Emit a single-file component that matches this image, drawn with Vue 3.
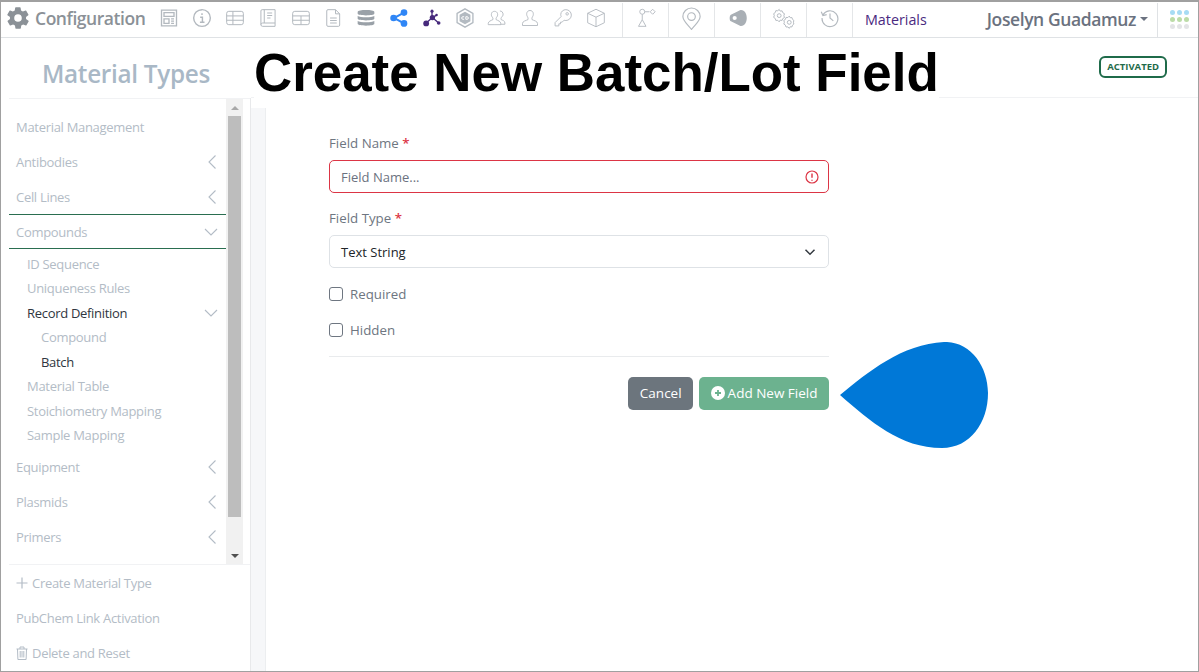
<script setup>
const icons = [
  { d: 'M3 2.500h18v19H3zM6 5.500h12v4.500H6zM6 13h6v5.500H6zM14.500 13H18M14.500 15.700H18M14.500 18.400H18', w: 1.600 },
  { d: 'M12 2a10 10 0 1 0 0 20a10 10 0 0 0 0-20zM12 6.200v2.300M9.800 11h2.700v6M9.500 17h5.500', w: 1.700 },
  { d: 'M4.500 4h15A2.500 2.500 0 0 1 22 6.500v11a2.500 2.500 0 0 1-2.500 2.500h-15A2.500 2.500 0 0 1 2 17.500v-11A2.500 2.500 0 0 1 4.500 4zM2 9.500h20M2 14.700h20M9.500 4V20', w: 1.200 },
  { d: 'M3.500 20V3.500A1.500 1.500 0 0 1 5 2h15.500v16H5.500A2 2 0 0 0 3.500 20A2 2 0 0 0 5.500 22h15v-4M7.500 2v16M11 6h6M11 9h6M11 12h4', w: 1.200 },
  { d: 'M4.500 4h15A2.500 2.500 0 0 1 22 6.500v11a2.500 2.500 0 0 1-2.500 2.500h-15A2.500 2.500 0 0 1 2 17.500v-11A2.500 2.500 0 0 1 4.500 4zM2 9.500h20M2 14.700h20M12 9.500V20', w: 1.200 },
  { d: 'M6 2h9l5 5v13.500a1.500 1.500 0 0 1-1.500 1.500H6a1.500 1.500 0 0 1-1.500-1.500v-17A1.500 1.500 0 0 1 6 2zM15 2v5h5M8.500 12h8M8.500 15h8M8.500 18h8', w: 1.200 }
]
const icons2 = [
  { d: 'M15.500 3.500a4 4 0 0 1 2.500 7c-1 1-1.500 2-1 3.500c2 .8 4.500 1.500 4.500 4v1.500H16M8.500 20H1.500v-1.500c0-2.500 3.500-3.500 5.500-4.500c.5-1.500-.2-2.500-1-3.500c-1.500-2-1-6.500 3-6.500s4.500 4.500 3 6.500c-.8 1-1.500 2-1 3.500c2 1 5.500 2 5.500 4.500V20z', w: 1.100 },
  { d: 'M12 3c4 0 4.800 4.500 3.300 7c-.8 1.300-1.300 2.500-.8 4c2 1 6.500 1.800 6.500 4.500V21H3v-2.500c0-2.700 4.500-3.500 6.500-4.500c.5-1.500 0-2.700-.8-4C7.200 7.500 8 3 12 3z', w: 1.100 },
  { d: 'M15.500 2a6.500 6.500 0 0 1 0 13c-.8 0-1.500-.1-2.200-.4L11 17H9v2H7v2.500H2.500v-4l7.300-7.300c-.3-.7-.5-1.500-.5-2.500a6 6 0 0 1 6.200-5.700zM17 5.500a1.500 1.500 0 1 0 0 3a1.500 1.500 0 0 0 0-3z', w: 1.100 },
  { d: 'M12 1.500l10 4.800v11.400L12 22.500L2 17.700V6.300zM2 6.300l10 4.700l10-4.700M12 11v11.500', w: 1.100 }
]
const dots = ['#a7dcf4', '#a7dcf4', '#a7dcf4', '#bcdca8', '#bcdca8', '#bcdca8', '#e3e4e6', '#e3e4e6', '#e3e4e6']
</script>

<template>
  <div class="frame">
    <header class="topbar">
      <div class="brand">
        <svg class="gear" viewBox="0 0 24 24"><path d="M19.400 13a7.700 7.700 0 0 0 0-2l2.100-1.600a.5.5 0 0 0 .1-.6l-2-3.500a.5.5 0 0 0-.6-.2l-2.500 1a7.300 7.300 0 0 0-1.700-1l-.4-2.600a.5.500 0 0 0-.5-.4h-4a.5.500 0 0 0-.5.400l-.4 2.600a7.300 7.300 0 0 0-1.700 1l-2.500-1a.5.500 0 0 0-.6.200l-2 3.500a.5.500 0 0 0 .1.600L4.600 11a7.700 7.700 0 0 0 0 2l-2.100 1.600a.5.500 0 0 0-.1.600l2 3.500c.1.200.4.300.6.200l2.500-1c.5.400 1.100.700 1.700 1l.4 2.600c0 .2.200.4.500.4h4c.3 0 .5-.2.500-.4l.4-2.600c.6-.3 1.200-.6 1.700-1l2.500 1c.2.100.5 0 .6-.2l2-3.500a.5.500 0 0 0-.1-.6zM12 15.500a3.500 3.500 0 1 1 0-7a3.500 3.500 0 0 1 0 7z"/></svg>
        <span>Configuration</span>
      </div>
      <div class="icons">
        <span v-for="(ic, i) in icons" :key="i" class="ic">
          <svg viewBox="0 0 24 24" class="line"><path :d="ic.d" :stroke-width="ic.w"/></svg>
        </span>
        <span class="ic">
          <svg viewBox="0 0 24 24"><path fill="#9aa1a8" d="M2 4.500C2 1.500 22 1.500 22 4.500v2.500C22 9.500 2 9.500 2 7zM2 9.500c3 2.200 17 2.200 20 0V13c0 2.500-20 2.500-20 0zM2 15.500c3 2.200 17 2.200 20 0v3.500c0 3-20 3-20 0z"/></svg>
        </span>
        <span class="ic">
          <svg viewBox="0 0 24 24"><path fill="none" stroke="#2f86f6" stroke-width="2.400" d="M18 5.500L6 12l12 6.500"/><circle cx="18" cy="5.500" r="4" fill="#2f86f6"/><circle cx="5.500" cy="12" r="4" fill="#2f86f6"/><circle cx="18" cy="18.500" r="4" fill="#2f86f6"/></svg>
        </span>
        <span class="ic">
          <svg viewBox="0 0 24 24"><path fill="none" stroke="#472a7c" stroke-width="1.600" d="M12 4v7.500M12.500 11.500L5 18M12.500 11.500L20 18M12.500 11.500l5-3"/><circle cx="12" cy="3.800" r="1.900" fill="#472a7c"/><circle cx="12.500" cy="11.500" r="3.200" fill="#472a7c"/><circle cx="5" cy="18.500" r="3.500" fill="#472a7c"/><circle cx="20" cy="18" r="2.200" fill="#472a7c"/><circle cx="17.500" cy="8.500" r="1.500" fill="#472a7c"/></svg>
        </span>
        <span class="ic">
          <svg viewBox="0 0 24 24"><path fill="none" stroke="#b3bac1" stroke-width="1.600" d="M12 1l9.500 5.500v11L12 23l-9.500-5.500v-11z"/><path fill="#b3bac1" d="M12 4.500l6.500 3.700v7.600L12 19.500l-6.500-3.700V8.200z"/><path fill="none" stroke="#fff" stroke-width="1.200" d="M11 10.500H9.500a1.500 1.500 0 0 0 0 3H11M13 10.500h1.500a1.500 1.500 0 0 1 0 3H13z"/></svg>
        </span>
        <span v-for="(ic, i) in icons2" :key="'b' + i" class="ic">
          <svg viewBox="0 0 24 24" class="line"><path :d="ic.d" :stroke-width="ic.w"/></svg>
        </span>
      </div>
      <div class="cell branch">
        <svg viewBox="0 0 24 24" class="line"><path stroke-width="1.100" d="M7.500 1.500a3 3 0 1 0 0 6a3 3 0 0 0 0-6zM10.500 4.500H16M20 1.500l3 3l-3 3l-3-3zM7.500 7.500V14M7.500 14l4.500 8H3z"/></svg>
      </div>
      <div class="cell pin">
        <svg viewBox="0 0 24 24" class="line"><path stroke-width="1.200" d="M12 1a9 9 0 0 1 9 9c0 5-5.500 8.500-9 13.500C8.500 18.500 3 15 3 10A9 9 0 0 1 12 1zM12 6a4 4 0 1 0 0 8a4 4 0 0 0 0-8z"/></svg>
      </div>
      <div class="cell shield">
        <svg viewBox="0 0 24 24"><path fill="#a9afb5" fill-rule="evenodd" d="M3.500 8L15 2.500C20 2 22.500 7 22.500 12S20 22 15 21.500L3.500 16C1.500 15 1.500 9 3.500 8zM8 9.500a2.500 2.500 0 1 0 0 5a2.500 2.500 0 0 0 0-5z"/></svg>
      </div>
      <div class="cell gears">
        <svg viewBox="0 0 24 24" class="line"><path stroke-width="1" d="M7.500 2.500l1 1.800l2-.3l.8 2l1.700 1l-.6 2l.6 2l-1.700 1l-.8 2l-2-.3l-1 1.800l-1.500-1.600l-2 .1l-.6-2l-1.700-1.200l.7-1.900l-.7-1.900l1.700-1.200l.6-2l2 .1zM7.500 7a2 2 0 1 0 0 4a2 2 0 0 0 0-4zM18 9.500l1 1.700l1.800-.2l.6 1.900l1.400 1.100l-.4 1.900l.4 1.900l-1.400 1.100l-.6 1.900l-1.800-.2l-1 1.700l-1.400-1.500l-2 .1l-.6-2l-1.700-1.100l.6-1.900l-.6-1.900l1.700-1.100l.6-2l2 .1zM18 14a2 2 0 1 0 0 4a2 2 0 0 0 0-4z"/></svg>
      </div>
      <div class="cell history">
        <svg viewBox="0 0 24 24" class="line"><path stroke-width="1.400" d="M3.500 8.500A9.500 9.500 0 1 1 2.500 12M1.500 4.500l2 4.500l4.500-1M12 6.500V12l4 3.500"/></svg>
      </div>
      <div class="materials">Materials</div>
      <div class="user">Joselyn Guadamuz<i class="caret"></i></div>
      <div class="apps">
        <i v-for="(c, i) in dots" :key="i" :style="{ background: c }"></i>
      </div>
    </header>

    <div class="subhead">
      <div class="subhead-left"><h2>Material Types</h2></div>
      <div class="subhead-right"><span class="badge">ACTIVATED</span></div>
    </div>

    <div class="body">
      <aside class="sidebar">
        <div class="scroll">
          <nav class="menu">
            <a class="row">Material Management</a>
            <a class="row">Antibodies<svg viewBox="0 0 12 16" class="chev"><path d="M9.500 1.500L3 8l6.500 6.500"/></svg></a>
            <a class="row">Cell Lines<svg viewBox="0 0 12 16" class="chev"><path d="M9.500 1.500L3 8l6.500 6.500"/></svg></a>
            <a class="row open">Compounds<svg viewBox="0 0 16 12" class="chev down"><path d="M2 3l6 6l6-6"/></svg></a>
            <div class="sub">
              <a>ID Sequence</a>
              <a>Uniqueness Rules</a>
              <a class="active">Record Definition<svg viewBox="0 0 16 12" class="chev down"><path d="M2 3l6 6l6-6"/></svg></a>
              <a class="deep">Compound</a>
              <a class="deep active">Batch</a>
              <a>Material Table</a>
              <a>Stoichiometry Mapping</a>
              <a>Sample Mapping</a>
            </div>
            <a class="row">Equipment<svg viewBox="0 0 12 16" class="chev"><path d="M9.500 1.500L3 8l6.500 6.500"/></svg></a>
            <a class="row">Plasmids<svg viewBox="0 0 12 16" class="chev"><path d="M9.500 1.500L3 8l6.500 6.500"/></svg></a>
            <a class="row">Primers<svg viewBox="0 0 12 16" class="chev"><path d="M9.500 1.500L3 8l6.500 6.500"/></svg></a>
          </nav>
          <div class="scrollbar">
            <i class="arrow up"></i>
            <div class="thumb"></div>
            <i class="arrow dn"></i>
          </div>
        </div>
        <div class="actions">
          <a><svg viewBox="0 0 12 12" class="plus"><path d="M6 .5v11M.5 6h11"/></svg>Create Material Type</a>
          <a>PubChem Link Activation</a>
          <a><svg viewBox="0 0 12 14" class="trash"><path d="M.5 3h11M4 3V1h4v2M1.500 3l.4 10.500h8.200L10.500 3M4.200 5v6.500M6 5v6.500M7.800 5v6.500"/></svg>Delete and Reset</a>
        </div>
      </aside>
      <div class="gutter"></div>
      <main class="content">
        <form class="form" @submit.prevent>
          <label class="label">Field Name <b>*</b></label>
          <div class="input invalid">
            <span>Field Name...</span>
            <svg viewBox="0 0 14 14" class="warn"><circle cx="7" cy="7" r="6"/><path d="M7 3.500v4.200M7 9.700v1"/></svg>
          </div>
          <label class="label second">Field Type <b>*</b></label>
          <div class="input select">
            <span>Text String</span>
            <svg viewBox="0 0 16 16" class="caret-down"><path d="M2 5l6 6l6-6"/></svg>
          </div>
          <label class="check first"><i></i>Required</label>
          <label class="check"><i></i>Hidden</label>
          <hr />
          <div class="buttons">
            <button type="button" class="btn cancel">Cancel</button>
            <button type="button" class="btn add">
              <svg viewBox="0 0 14 14"><circle cx="7" cy="7" r="7" fill="#fff"/><path d="M7 4v6M4 7h6" stroke="#6cb28f" stroke-width="1.800"/></svg>Add New Field
            </button>
          </div>
        </form>
      </main>
    </div>

    <h1 class="overlay-title">Create New Batch/Lot Field</h1>
    <svg class="drop" viewBox="0 0 148 106"><path d="M0 53C28 30 62 2 104 0c26-1 44 24 44 51c0 30-18 55-46 55C60 106 30 79 0 53z"/></svg>
  </div>
</template>

<style>
html, body { margin: 0; background: #fff; }
</style>

<style scoped>
.frame {
  position: relative;
  width: 1199px;
  height: 672px;
  box-sizing: border-box;
  border: 1px solid #a0a0a0;
  border-top-width: 2px;
  font-family: "Open Sans", "Noto Sans", sans-serif;
  overflow: hidden;
  display: flex;
  flex-direction: column;
  background: #fff;
}
svg { display: block; }
.line path { fill: none; stroke: #b3b9bf; }
.topbar {
  display: flex;
  align-items: center;
  height: 35px;
  flex: none;
  border-bottom: 1px solid #dfe2e5;
}
.brand {
  display: flex;
  align-items: center;
  width: 152px;
  padding: 0 0 4px 4px;
  box-sizing: border-box;
  color: #8b9197;
  font-weight: 600;
  font-size: 17.500px;
  letter-spacing: -.45px;
  gap: 4px;
  flex: none;
}
.gear { width: 26px; height: 26px; flex: none; }
.gear path { fill: #8b9197; fill-rule: evenodd; }
.icons { display: flex; width: 469px; padding-bottom: 3px; flex: none; }
.ic { width: 32.800px; display: flex; justify-content: center; flex: none; }
.ic svg { width: 20px; height: 20px; }
.cell {
  height: 34px;
  padding-bottom: 3px;
  width: 46px;
  display: flex;
  align-items: center;
  justify-content: center;
  border-left: 1px solid #e4e6e8;
  box-sizing: border-box;
  flex: none;
}
.cell svg { width: 20px; height: 20px; }
.pin svg { width: 23px; height: 23px; }
.gears svg { width: 23px; height: 23px; }
.materials {
  border-left: 1px solid #e4e6e8;
  height: 34px;
  line-height: 34px;
  padding-left: 12px;
  width: 122px;
  box-sizing: border-box;
  color: #4a2a80;
  font-size: 14.300px;
  flex: none;
}
.user {
  display: flex;
  align-items: center;
  justify-content: flex-end;
  color: #6b7280;
  font-size: 17.500px;
  font-weight: 600;
  width: 183px;
  padding: 0 9px 1px 0;
  box-sizing: border-box;
  flex: none;
  letter-spacing: -.4px;
}
.caret {
  margin-left: 4px;
  border: 4px solid transparent;
  border-top-color: #6b7280;
  border-bottom: 0;
}
.apps {
  border-left: 1px solid #dfe2e5;
  height: 34px;
  width: 40px;
  box-sizing: border-box;
  display: grid;
  grid-template-columns: repeat(3, 5px);
  gap: 2px;
  padding-left: 4px;
  justify-content: center;
  align-content: center;
  flex: none;
}
.apps i { width: 5px; height: 5px; border-radius: 50%; }
.subhead { display: flex; height: 60px; flex: none; }
.subhead-left {
  width: 250px;
  box-sizing: border-box;
  text-align: center;
  flex: none;
}
.subhead-left h2 {
  margin: 0;
  line-height: 72px;
  font-size: 24.300px;
  font-weight: 600;
  color: #a9b8c6;
  letter-spacing: -.3px;
}
.subhead-right {
  flex: 1;
  display: flex;
  justify-content: flex-end;
  align-items: flex-start;
  padding: 18px 31px 0 0;
  border-bottom: 1px solid #f1f2f4;
}
.badge {
  border: 2px solid #1f6b4a;
  border-radius: 6px;
  color: #1f6b4a;
  font-size: 9.500px;
  font-weight: 700;
  padding: 3px 6px;
  line-height: 12px;
}
.body { flex: 1; display: flex; min-height: 0; }
.sidebar {
  width: 250px;
  box-sizing: border-box;
  padding-left: 8px;
  border-right: 1px solid #e8e9eb;
  display: flex;
  flex-direction: column;
  flex: none;
}
.scroll {
  display: flex;
  height: 467px;
  border-top: 1px solid #f1f2f4;
  border-bottom: 1px solid #f1f2f4;
  box-sizing: border-box;
  flex: none;
}
.menu { width: 217px; flex: none; box-sizing: border-box; font-size: 13px; letter-spacing: -.3px; color: #b3bcc6; padding-top: 10px; }
.row {
  display: flex;
  align-items: center;
  justify-content: space-between;
  height: 35px;
  padding: 0 8px 0 7px;
  box-sizing: border-box;
}
.row.open {
  border-top: 1px solid #2a6e50;
  border-bottom: 1px solid #2a6e50;
}
.chev { width: 12px; height: 16px; flex: none; }
.chev.down { width: 16px; height: 12px; margin-right: -1px; }
.chev path { fill: none; stroke: #b3bcc6; stroke-width: 1.100; }
.sub { display: flex; flex-direction: column; padding: 2.500px 0 1.500px 18px; }
.sub a {
  height: 24.500px;
  display: flex;
  align-items: center;
  justify-content: space-between;
  padding-right: 8px;
}
.sub .deep { padding-left: 14px; }
.sub .active { color: #2f3640; }
.scrollbar {
  width: 17px;
  background: #f1f1f1;
  display: flex;
  flex-direction: column;
  align-items: center;
  flex: none;
}
.thumb { width: 13px; height: 401px; background: #bdbdbd; }
.arrow { height: 17px; width: 17px; flex: none; position: relative; }
.arrow::after {
  content: '';
  position: absolute;
  left: 4.500px;
  border: 4px solid transparent;
}
.arrow.up::after { top: 3px; border-bottom-color: #a8a8a8; }
.arrow.dn { margin-top: auto; }
.arrow.dn::after { top: 7px; border-top-color: #505050; }
.actions { display: flex; flex-direction: column; font-size: 13px; letter-spacing: -.3px; color: #b3bcc6; }
.actions a { height: 35px; display: flex; align-items: center; gap: 4px; padding-left: 7px; }
.plus { width: 12px; height: 12px; }
.plus path { fill: none; stroke: #b3bcc6; stroke-width: 1.200; }
.trash { width: 12px; height: 14px; }
.trash path { fill: none; stroke: #b3bcc6; stroke-width: 1; }
.gutter { width: 15px; background: #f6f7f9; margin-top: 10px; flex: none; border-right: 1px solid #eceef0; box-sizing: border-box; }
.content { flex: 1; padding: 36px 0 0 63px; }
.form { width: 500px; }
.label { display: block; font-size: 13.300px; line-height: 18px; color: #6e7681; margin-bottom: 8px; }
.label b { color: #dc3545; font-weight: 600; }
.label.second { margin-top: 16px; }
.input {
  height: 33px;
  box-sizing: border-box;
  border: 1px solid #dee2e6;
  border-radius: 5px;
  display: flex;
  align-items: center;
  justify-content: space-between;
  padding: 0 9px 0 11px;
  font-size: 13px;
  color: #212529;
}
.input.invalid { border-color: #dc3545; color: #6b7280; }
.warn { width: 14px; height: 14px; }
.warn circle { fill: none; stroke: #dc3545; stroke-width: 1.200; }
.warn path { fill: none; stroke: #dc3545; stroke-width: 1.400; }
.caret-down { width: 12px; height: 12px; margin-right: 3px; }
.caret-down path { fill: none; stroke: #343a40; stroke-width: 2; }
.check {
  display: flex;
  align-items: center;
  gap: 7px;
  font-size: 13.300px;
  color: #6e7681;
  height: 18px;
  margin-top: 18px;
}
.check.first { margin-top: 17px; }
.check i {
  width: 14px;
  height: 14px;
  box-sizing: border-box;
  border: 1px solid #6e7681;
  border-radius: 3px;
}
hr { border: 0; border-top: 1px solid #e9ebed; margin: 17px 0 20px; }
.buttons { display: flex; justify-content: flex-end; gap: 6px; }
.btn {
  height: 33px;
  border: 0;
  border-radius: 5px;
  color: #fff;
  font: inherit;
  font-size: 13.500px;
  display: flex;
  align-items: center;
  gap: 3px;
  padding: 0 11.500px 1px;
}
.btn svg { width: 14px; height: 14px; }
.cancel { background: #6c757d; }
.add { background: #6cb28f; }
.overlay-title {
  position: absolute;
  left: 253px;
  top: 39px;
  margin: 0;
  padding: 0;
  font-family: "Liberation Sans", Arial, sans-serif;
  font-weight: 700;
  font-size: 52.900px;
  line-height: 64px;
  color: #000;
  background: #fff;
  white-space: nowrap;
}
.drop { position: absolute; left: 839px; top: 340px; width: 148px; height: 106px; }
.drop path { fill: #0078d7; }
</style>
